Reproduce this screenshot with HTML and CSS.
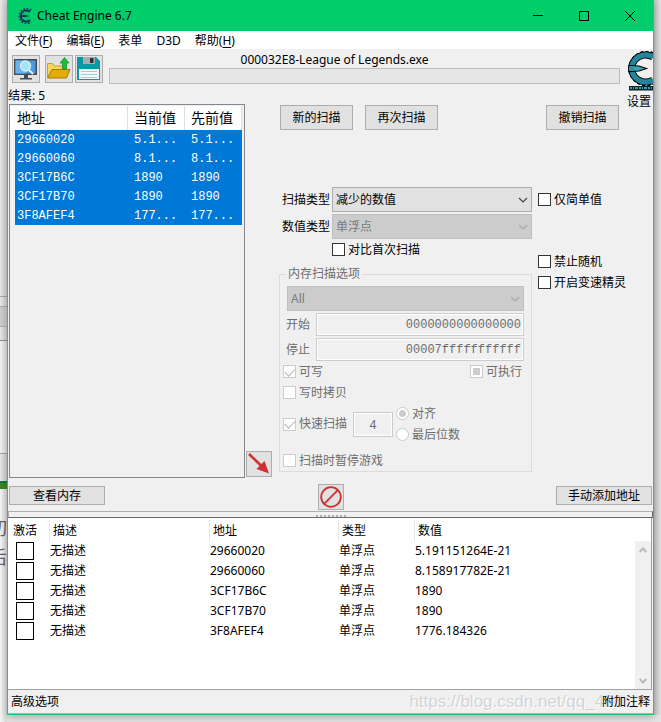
FILE: index.html
```html
<!DOCTYPE html>
<html lang="zh-CN">
<head>
<meta charset="utf-8">
<title>Cheat Engine 6.7</title>
<link rel="stylesheet" href="styles.css">
</head>
<body>
<div class="behind behind-left" aria-hidden="true">
  <div class="behind-top"></div>
  <div class="behind-bar"></div>
  <div class="behind-row"></div>
  <div class="behind-panel"></div>
  <div class="behind-foot"></div>
  <div class="behind-green"></div>
  <div class="behind-page"><span>切</span><span>后</span></div>
</div>
<div class="window">
  <header class="titlebar">
    <svg class="app-icon" viewBox="0 0 16 16" width="16" height="16" aria-hidden="true">
      <path d="M13 4A5.500 5.500 0 1 0 13 12" fill="none" stroke="#12395c" stroke-width="2"/>
      <path d="M14 2.300A7.200 7.200 0 1 0 14 13.700" fill="none" stroke="#12395c" stroke-width="2" stroke-dasharray="1.600 1.500"/>
      <path d="M3 7.200 8 6.800 12.500 8 8 9.200 3 8.800Z" fill="#12395c"/>
    </svg>
    <h1>Cheat Engine 6.7</h1>
    <button class="caption" aria-label="最小化"><svg viewBox="0 0 10 10" width="10" height="10"><path d="M0 4.500H10" stroke="#000"/></svg></button>
    <button class="caption" aria-label="最大化"><svg viewBox="0 0 10 10" width="10" height="10"><path d="M.5.5h9v9h-9z" fill="none" stroke="#000"/></svg></button>
    <button class="caption" aria-label="关闭"><svg viewBox="0 0 10 10" width="10" height="10"><path d="M0 0 10 10M10 0 0 10" stroke="#000"/></svg></button>
  </header>
  <nav class="menu">
    <a href="#">文件(<u>F</u>)</a>
    <a href="#">编辑(<u>E</u>)</a>
    <a href="#">表单</a>
    <a href="#">D3D</a>
    <a href="#">帮助(<u>H</u>)</a>
  </nav>

  <section class="topbar">
    <div class="tools">
      <button class="tool" aria-label="打开进程">
        <svg viewBox="0 0 26 26" width="26" height="26">
          <path d="M1 3h23v16H1z" fill="#454b50"/><path d="M2.500 4.500h20v13h-20z" fill="#4a9be0"/>
          <path d="M2.500 4.500h10v13h-10z" fill="#69b2f0"/>
          <path d="M11 19h4v3h4v1.500H7V22h4z" fill="#454b50"/>
          <path d="M16 14l4 4" stroke="#e8f2f5" stroke-width="2"/>
          <circle cx="12.500" cy="10" r="5" fill="#a9e3f6" stroke="#d9eef5" stroke-width="1.300"/>
        </svg>
      </button>
      <button class="tool" aria-label="打开文件">
        <svg viewBox="0 0 26 26" width="26" height="26">
          <path d="M1.500 21V7.500h5l2 2.500h10v11z" fill="#f6d75a" stroke="#c9a021"/>
          <path d="M1.500 22 6 13.500h18L20.500 22z" fill="#e2ad08" stroke="#a87a00"/>
          <path d="M18.500 1.500 23 7h-2.500v6h-4V7H14z" fill="#1ebd3a" stroke="#0d8a25" stroke-width=".7"/>
        </svg>
      </button>
      <button class="tool tool-save" aria-label="保存">
        <svg viewBox="0 0 26 26" width="26" height="26">
          <path d="M1 1h19l4 4v19H1z" fill="#0899a2"/>
          <path d="M7 1h12v7H7z" fill="#a9adaf"/><path d="M14 2h3.500v5H14z" fill="#2b3335"/>
          <path d="M3 13h20v10H3z" fill="#f6f8f8"/>
          <path d="M5 15.500h16M5 18.500h16M5 21.500h16" stroke="#9fd0d3"/>
        </svg>
      </button>
    </div>
    <div class="process">
      <div class="process-name">000032E8-League of Legends.exe</div>
      <div class="progress" role="progressbar" aria-label="扫描进度"></div>
    </div>
    <a class="settings" href="#">
      <svg viewBox="0 0 28 40" width="28" height="40" aria-hidden="true">
        <path d="M28 6A14 13.500 0 1 0 28 29" fill="none" stroke="#000" stroke-width="7"/>
        <path d="M28 3A16 16 0 1 0 28 32" fill="none" stroke="#000" stroke-width="3.500" stroke-dasharray="3 1.800"/>
        <path d="M28 6A14 13.500 0 1 0 28 29" fill="none" stroke="#26849a" stroke-width="5"/>
        <path d="M28 4A15 15 0 1 0 28 31" fill="none" stroke="#26849a" stroke-width="2.500" stroke-dasharray="2.600 2.200"/>
        <path d="M4 14.500 14 15 21.500 17.500 14 20 4 20.500Z" fill="#3aa3b5" stroke="#000" stroke-width="1.200"/>
        <path d="M4 15.300h5v4.400H4z" fill="#2f93a7"/>
        <path d="M4 35h24v4.500H4z" fill="#08252c"/>
        <path d="M5 37h23" stroke="#3a9bae" stroke-width="2" stroke-dasharray="2 1 1 1 3 1"/>
      </svg>
      <span>设置</span>
    </a>
    <div class="results">结果: 5</div>
  </section>

  <main class="scan">
    <div class="found">
      <table>
        <colgroup><col class="f-address"><col class="f-value"><col class="f-value"></colgroup>
        <thead><tr><th>地址</th><th>当前值</th><th>先前值</th></tr></thead>
        <tbody>
          <tr><td>29660020</td><td>5.1...</td><td>5.1...</td></tr>
          <tr><td>29660060</td><td>8.1...</td><td>8.1...</td></tr>
          <tr><td>3CF17B6C</td><td>1890</td><td>1890</td></tr>
          <tr><td>3CF17B70</td><td>1890</td><td>1890</td></tr>
          <tr><td>3F8AFEF4</td><td>177...</td><td>177...</td></tr>
        </tbody>
      </table>
    </div>
    <button class="square add-selected" aria-label="添加选中的地址">
      <svg viewBox="0 0 24 24" width="24" height="24"><path d="M2 2 16 15.500" stroke="#d03030" stroke-width="2.600"/><path d="M22 21.500 9.500 17 17.500 9Z" fill="#d03030"/></svg>
    </button>
    <form class="options">
      <div class="actions">
        <button type="button" class="btn">新的扫描</button>
        <button type="button" class="btn">再次扫描</button>
        <button type="button" class="btn undo">撤销扫描</button>
      </div>
      <div class="left">
        <div class="field">
          <label for="scan-type">扫描类型</label>
          <span class="select"><select id="scan-type"><option>减少的数值</option></select><svg viewBox="0 0 10 6" width="10" height="6"><path d="M1 1 5 5 9 1" fill="none" stroke="currentColor" stroke-width="1.200"/></svg></span>
        </div>
        <div class="field">
          <label for="value-type">数值类型</label>
          <span class="select off"><select id="value-type" disabled><option>单浮点</option></select><svg viewBox="0 0 10 6" width="10" height="6"><path d="M1 1 5 5 9 1" fill="none" stroke="currentColor" stroke-width="1.200"/></svg></span>
        </div>
        <label class="check compare"><input type="checkbox">对比首次扫描</label>
        <fieldset disabled>
          <legend>内存扫描选项</legend>
          <div class="memory">
            <span class="select off region"><select aria-label="内存区域"><option>All</option></select><svg viewBox="0 0 10 6" width="10" height="6"><path d="M1 1 5 5 9 1" fill="none" stroke="currentColor" stroke-width="1.200"/></svg></span>
            <div class="range"><label for="start">开始</label><input class="text" id="start" value="0000000000000000"></div>
            <div class="range"><label for="stop">停止</label><input class="text" id="stop" value="00007fffffffffff"></div>
            <div class="flags">
              <label class="check"><input type="checkbox" checked>可写</label>
              <label class="check"><input type="checkbox" class="mixed">可执行</label>
            </div>
            <label class="check copy"><input type="checkbox">写时拷贝</label>
            <div class="fast">
              <label class="check"><input type="checkbox" checked>快速扫描</label>
              <input class="text align" aria-label="对齐值" value="4">
              <div class="radios">
                <label class="check"><input type="radio" name="align" checked>对齐</label>
                <label class="check"><input type="radio" name="align">最后位数</label>
              </div>
            </div>
            <label class="check pause"><input type="checkbox">扫描时暂停游戏</label>
          </div>
        </fieldset>
      </div>
      <div class="right">
        <label class="check simple"><input type="checkbox">仅简单值</label>
        <label class="check"><input type="checkbox">禁止随机</label>
        <label class="check"><input type="checkbox">开启变速精灵</label>
      </div>
    </form>
  </main>

  <div class="between">
    <button class="btn wide">查看内存</button>
    <button class="square" aria-label="清空列表">
      <svg viewBox="0 0 24 24" width="24" height="24"><circle cx="12" cy="12" r="9.800" fill="none" stroke="#d03030" stroke-width="1.800"/><path d="M5.200 18.800 18.800 5.200" stroke="#d03030" stroke-width="1.800"/></svg>
    </button>
    <button class="btn wide">手动添加地址</button>
  </div>
  <div class="splitter"><span></span></div>

  <section class="cheats">
    <table>
      <colgroup><col class="c-active"><col class="c-desc"><col class="c-address"><col class="c-type"><col></colgroup>
      <thead><tr><th>激活</th><th>描述</th><th>地址</th><th>类型</th><th>数值</th></tr></thead>
      <tbody>
        <tr><td><input type="checkbox" aria-label="激活 29660020"></td><td>无描述</td><td>29660020</td><td>单浮点</td><td>5.191151264E-21</td></tr>
        <tr><td><input type="checkbox" aria-label="激活 29660060"></td><td>无描述</td><td>29660060</td><td>单浮点</td><td>8.158917782E-21</td></tr>
        <tr><td><input type="checkbox" aria-label="激活 3CF17B6C"></td><td>无描述</td><td>3CF17B6C</td><td>单浮点</td><td>1890</td></tr>
        <tr><td><input type="checkbox" aria-label="激活 3CF17B70"></td><td>无描述</td><td>3CF17B70</td><td>单浮点</td><td>1890</td></tr>
        <tr><td><input type="checkbox" aria-label="激活 3F8AFEF4"></td><td>无描述</td><td>3F8AFEF4</td><td>单浮点</td><td>1776.184326</td></tr>
      </tbody>
    </table>
    <div class="scrollbar">
      <svg viewBox="0 0 8 6" width="8" height="6"><path d="M.7 5 4 1.500 7.300 5" fill="none" stroke="#b9b9b9" stroke-width="2"/></svg>
      <svg viewBox="0 0 8 6" width="8" height="6"><path d="M.7 1 4 4.500 7.300 1" fill="none" stroke="#b9b9b9" stroke-width="2"/></svg>
    </div>
  </section>
  <footer class="status">
    <a href="#">高级选项</a>
    <span class="watermark">https://blog.csdn.net/qq_430</span>
    <a href="#">附加注释</a>
  </footer>
</div>
<div class="behind behind-right" aria-hidden="true"></div>
</body>
</html>
```
FILE: styles.css
```css
* { box-sizing: border-box; }

body {
  margin: 0;
  min-height: 100vh;
  display: grid;
  grid-template-columns: 7px minmax(0, 1fr) 7px;
  padding-bottom: 7px;
  background: #e4e4e4;
  color: #000;
  font: 12px/14px "Noto Sans", "Noto Sans CJK SC", sans-serif;
}

button, input, select { font: inherit; color: inherit; margin: 0; }
a { color: inherit; text-decoration: none; }

/* Strips of the desktop on both sides of the window */
.behind { overflow: hidden; }
.behind-left { display: flex; flex-direction: column; margin-bottom: -7px; background: linear-gradient(90deg, #e8e8e8, #cfcfcf); }
.behind-right { background: linear-gradient(90deg, #c4c4c4, #e4e4e4); }
.behind-top { height: 297px; border-bottom: 1px solid #a4a4a8; }
.behind-bar { height: 21px; margin-top: 9px; border: solid #acacac; border-width: 1px 0; background: #ccc; }
.behind-row { height: 14px; border-bottom: 1px solid #8c8c8c; }
.behind-panel { height: 113px; background: linear-gradient(90deg, #f2f2f2, #dedede); border-bottom: 1px solid #a0a0a0; }
.behind-foot { height: 27px; }
.behind-green { height: 8px; background: #3f8523; border-top: 2px solid #087a50; }
.behind-page { flex: 1; padding-top: 25px; background: linear-gradient(90deg, #f6f6f6, #d8d8d8); color: #666; }
.behind-page span { display: flex; justify-content: flex-end; font-size: 18px; line-height: 29px; }

.window {
  display: flex;
  flex-direction: column;
  border: 1px solid #20c574;
  border-top: 0;
  background: #f0f0f0;
  box-shadow: 0 2px 8px #0004;
  min-width: 0;
  position: relative;
}

.titlebar { display: flex; align-items: center; height: 31px; padding-left: 9px; background: #00ce6b; }
.titlebar h1 { flex: 1; margin: 0 0 0 4px; font-size: 12px; font-weight: 400; }
.caption { display: grid; place-items: center; width: 46px; height: 31px; padding: 0; border: 0; background: none; }

.menu { display: flex; gap: 14px; height: 18px; padding: 3px 7px 0; background: #fff; }
.menu u { text-underline-offset: 2px; }

.topbar {
  display: grid;
  grid-template-columns: auto minmax(0, 1fr) 28px;
  grid-template-rows: 40px 15px;
  height: 55px;
}
.tools { display: flex; padding: 6px 6px 0 4px; }
.tool, .square { display: grid; place-items: center; padding: 0; border: 1px solid #adadad; background: #e1e1e1; }
.tool { width: 28px; height: 28px; margin-right: 5px; }
.tool:nth-child(2) { margin-right: 2px; }
.tool-save { margin-right: 0; }
.process { padding: 4px 5px 0 0; }
.process-name { height: 15px; padding-right: 60px; text-align: center; }
.progress { height: 16px; border: 1px solid #bcbcbc; background: #e6e6e6; }
.settings { display: block; padding-top: 2px; grid-row: span 2; }
.settings svg { display: block; margin-bottom: 4px; }
.settings span { display: block; text-align: center; }
.results { grid-column: 1 / 3; }

.scan { display: flex; padding-left: 1px; gap: 1px; }
.found { width: 236px; height: 374px; padding: 1px 2px 1px 0; border: 1px solid #828790; }
.found table { width: 100%; border-collapse: separate; border-spacing: 0; table-layout: fixed; }
.f-address { width: 118px; }
.f-value { width: 57px; }
.found th { height: 24px; padding: 0 0 0 6px; border-right: 1px solid #e0e0e0; background: #fff; font-size: 14px; font-weight: 400; text-align: left; white-space: nowrap; }
.found td { height: 19px; padding: 1px 0 0 6px; background: #0078d7; color: #fff; font-family: "Liberation Mono", monospace; }
.found th:first-child, .found td:first-child { padding-left: 7px; }
.found td:first-child { background: linear-gradient(90deg, #f0f0f0 5px, #0078d7 5px); }
.square { width: 26px; height: 26px; }
.add-selected { align-self: flex-end; margin-bottom: 1px; flex: none; }

.options {
  flex: 1;
  display: grid;
  grid-template-columns: minmax(0, 1fr) 115px;
  grid-template-rows: 25px auto;
  gap: 57px 6px;
  align-content: start;
  padding: 1px 0 0 6px;
}
.btn { height: 25px; padding: 0 11px; border: 1px solid #adadad; background: #e1e1e1; line-height: 14px; white-space: nowrap; }
.actions { grid-column: 1 / 3; display: flex; gap: 12px; padding: 0 34px 0 1px; }
.actions .btn { width: 73px; padding: 0; }
.actions .undo { margin-left: auto; }

.field { display: flex; align-items: center; margin-bottom: 2px; }
.field label { width: 53px; padding-left: 3px; white-space: nowrap; }
.select { position: relative; display: block; flex: 1; color: #000; }
.select select { display: block; width: 100%; height: 25px; padding: 0 3px; border: 1px solid #adadad; border-radius: 0; background: #e1e1e1; appearance: none; opacity: 1; }
.select svg { position: absolute; right: 4px; top: 10px; color: #444; pointer-events: none; }
.off select { border-color: #bfbfbf; background: #ccc; color: #7a7a7a; }
.off svg { color: #a8a8a8; }

.check { display: flex; align-items: center; gap: 3px; height: 13px; white-space: nowrap; }
.check input { display: grid; place-items: center; width: 13px; height: 13px; flex: none; border: 1px solid #333; background: #fff; appearance: none; }
.check input[type="radio"] { border-radius: 50%; }
.check input:disabled { border-color: #ccc; }
.check input[type="checkbox"]:checked::before { content: ""; width: 9px; height: 5px; border: solid #b4b4b4; border-width: 0 0 1px 1px; transform: translateY(-1px) rotate(-45deg); }
.check input[type="radio"]:checked::before { content: ""; width: 7px; height: 7px; border-radius: 50%; background: #ccc; }
.check .mixed::before { content: ""; width: 7px; height: 7px; background: #ccc; }
.compare { margin: 4px 0 11px 53px; }

fieldset { min-width: 0; margin: 0; padding: 0 7px 4px 3px; border: 1px solid #dcdcdc; color: #6d6d6d; }
legend { height: 14px; margin-left: 3px; padding: 0 2px; }
.memory { display: flex; flex-direction: column; padding-top: 5px; }
.region { margin: 0 0 2px 4px; flex: none; }
.range { display: flex; align-items: center; margin-bottom: 2px; padding-left: 3px; }
.range label { width: 30px; }
.text { min-width: 0; height: 23px; padding: 0 2px; border: 1px solid #ccc; outline: 1px solid #fff; outline-offset: -2px; background: #f0f0f0; color: #6d6d6d; }
.range .text { flex: 1; font-family: "Liberation Mono", monospace; text-align: right; }
.flags { display: flex; justify-content: space-between; margin: 2px 2px 8px 0; }
.fast { display: flex; align-items: center; margin: 8px 0 13px; }
.fast .align { width: 40px; height: 25px; margin: 0 3px 0 6px; text-align: center; }
.radios { display: grid; gap: 8px; }

.right { padding-top: 6px; display: grid; gap: 8px; align-content: start; }
.simple { margin-bottom: 41px; }

.between { display: grid; grid-template-columns: 1fr auto 1fr; padding: 6px 1px 1px; }
.wide { width: 96px; height: 19px; margin-top: 2px; padding: 0; }
.wide:last-child { justify-self: end; }

.splitter { display: grid; place-items: end center; height: 7px; border: 1px solid #b0b0b0; border-bottom-color: #696969; border-right-color: #696969; }
.splitter span { width: 30px; height: 2px; background: repeating-linear-gradient(90deg, #b0b0b0 0 2px, #f0f0f0 2px 4px); }

.cheats { flex: 1; display: flex; align-items: flex-start; padding-top: 2px; margin-right: 1px; background: #fff; border-right: 1px solid #a0a0a0; border-bottom: 1px solid #a0a0a0; }
.cheats table { flex: 1; min-width: 0; border-collapse: separate; border-spacing: 0; table-layout: fixed; }
.c-active { width: 41px; }
.c-desc { width: 160px; }
.c-address { width: 129px; }
.c-type { width: 76px; }
.cheats th { height: 21px; padding: 0 0 0 3px; border-left: 1px solid #e5e5e5; font-weight: 400; text-align: left; }
.cheats th:first-child { padding-left: 5px; border-left: 0; }
.cheats td { height: 20px; padding: 0 0 0 1px; white-space: nowrap; }
.cheats td:first-child { padding-left: 8px; }
.cheats td input { display: block; width: 18px; height: 18px; border: 1px solid #000; background: #fff; appearance: none; }
.scrollbar { align-self: stretch; display: flex; flex-direction: column; justify-content: space-between; align-items: center; width: 16px; margin-top: 21px; padding: 6px 0 5px; background: #f0f0f0; }

.status { position: relative; display: flex; justify-content: space-between; align-items: center; height: 24px; padding: 0 3px; border-bottom: 1px solid #b0b0b0; }
.watermark { position: absolute; right: 30px; top: 2px; color: #d4d4d4; font: 17px/20px "Liberation Sans", sans-serif; text-shadow: 1px 1px 0 #fff; }
.status a { position: relative; }
```
